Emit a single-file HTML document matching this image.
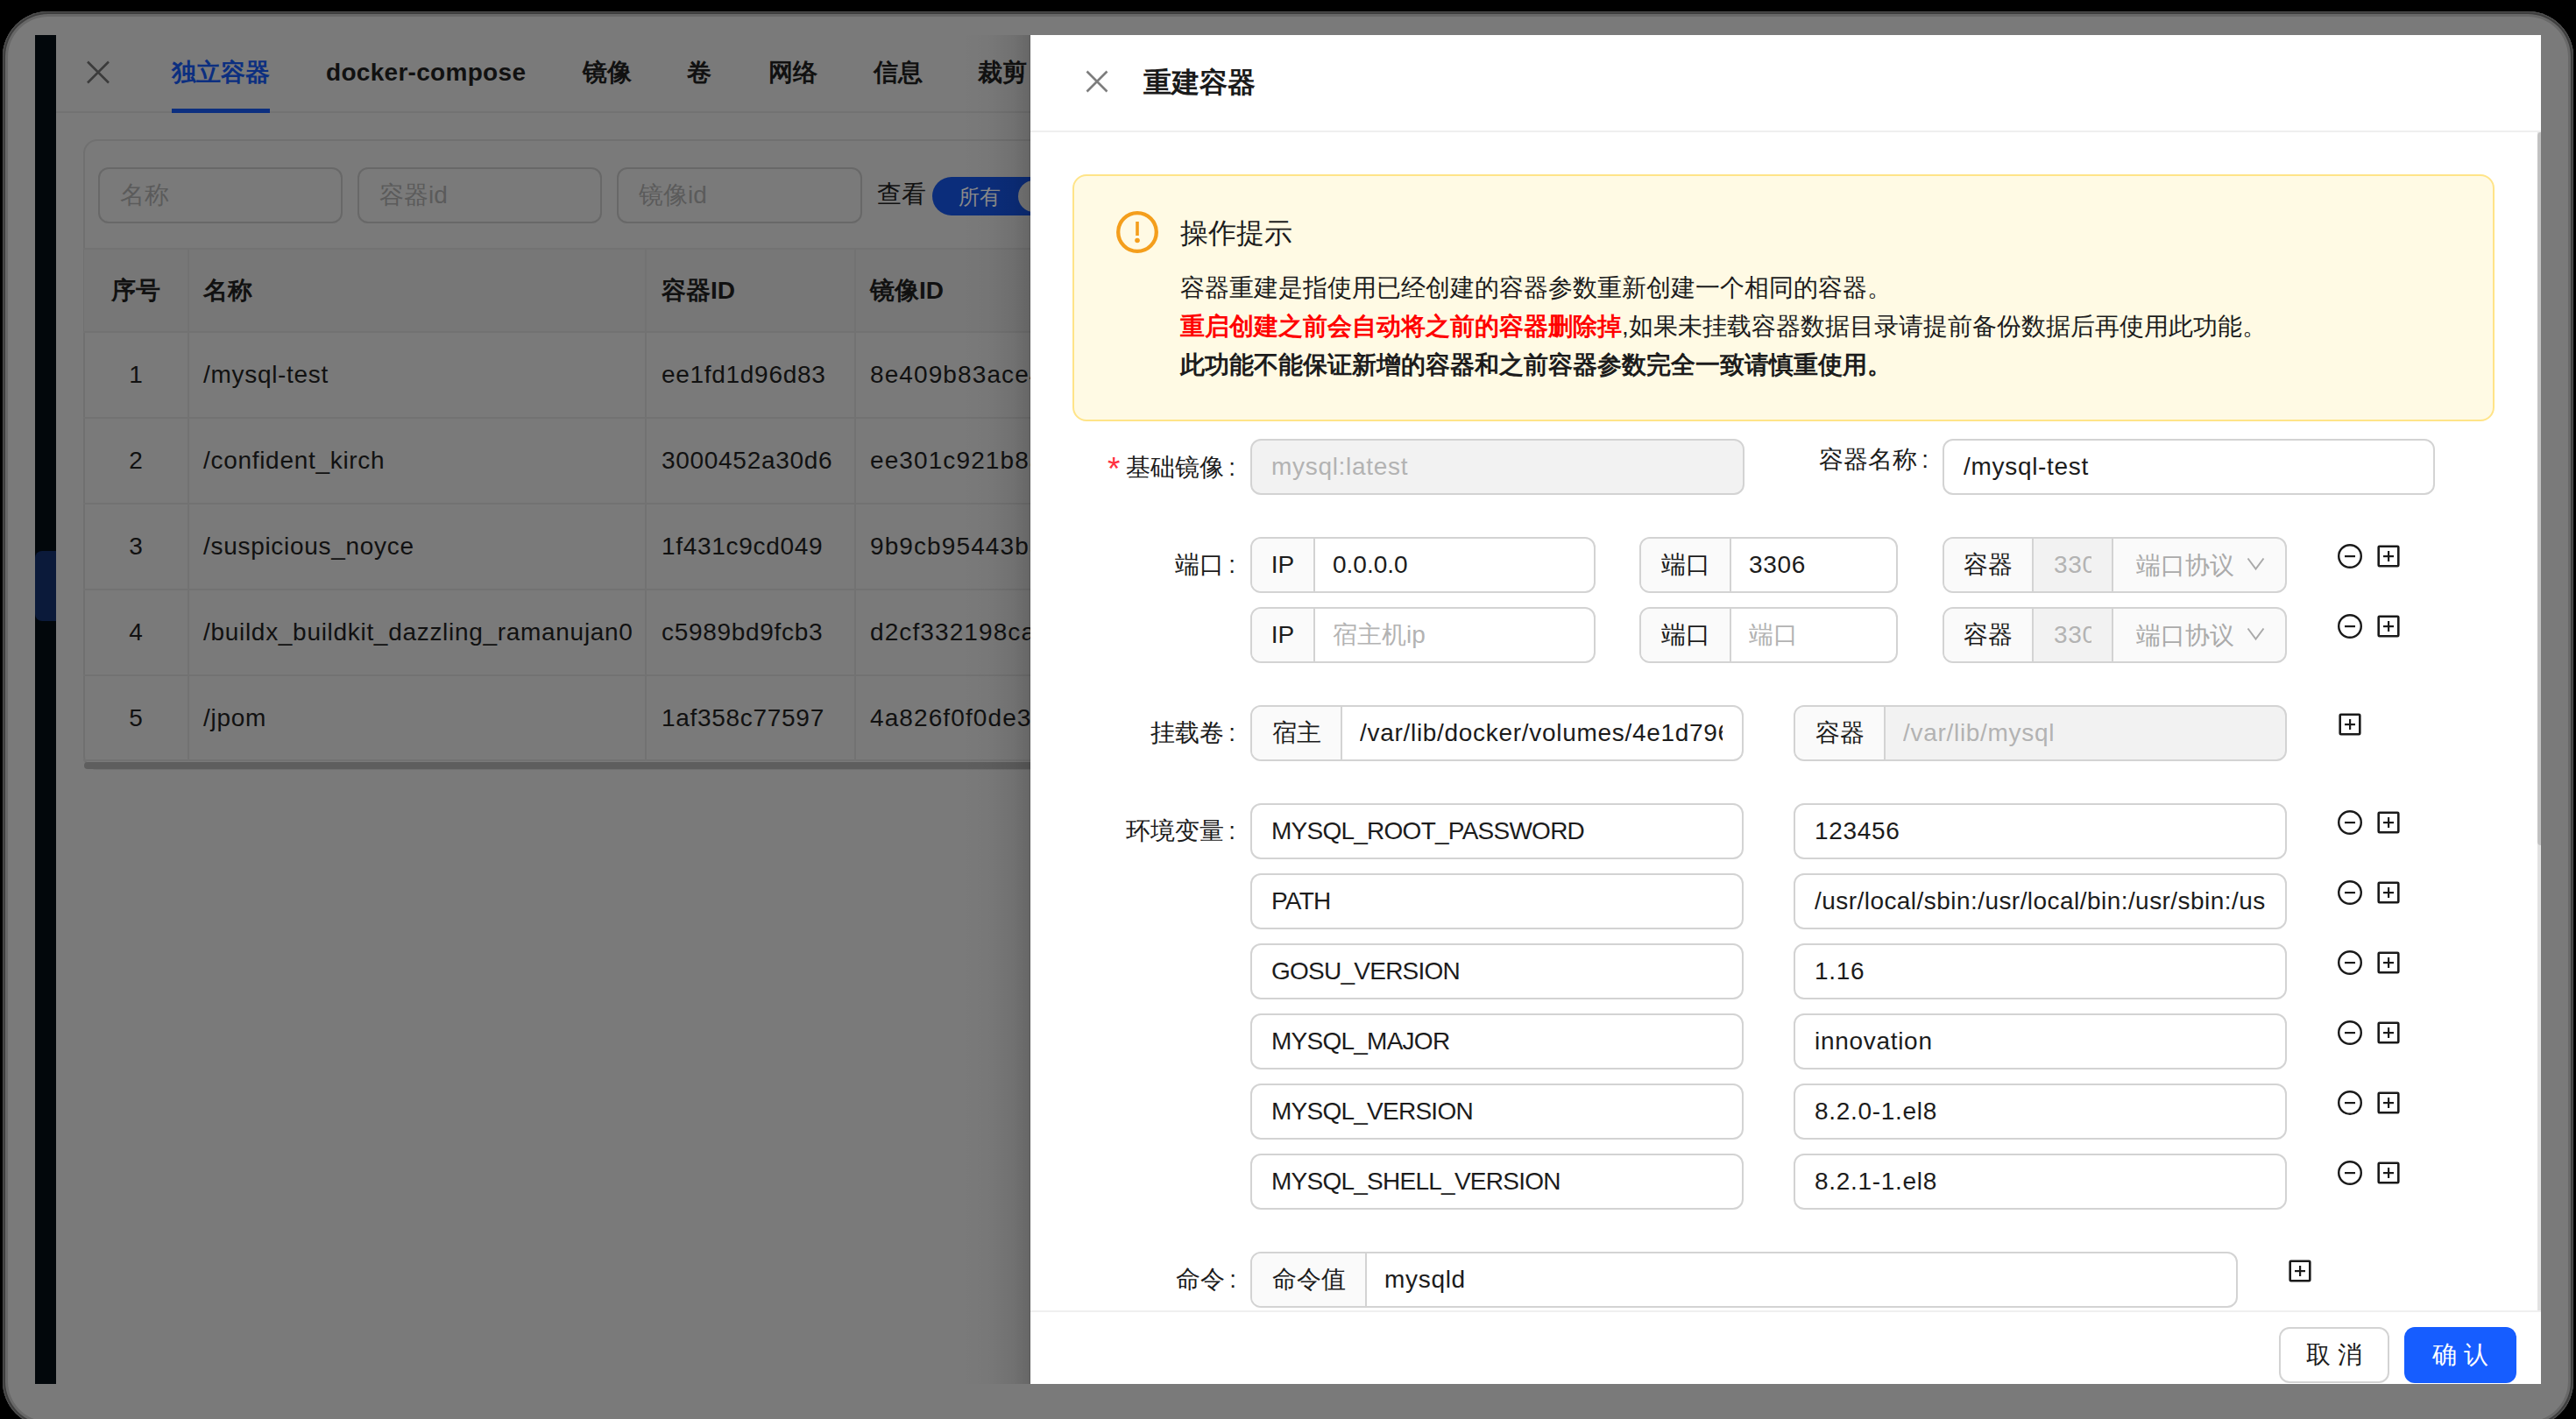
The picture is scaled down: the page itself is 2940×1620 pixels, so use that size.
<!DOCTYPE html>
<html><head><meta charset="utf-8"><style>
*{box-sizing:border-box;margin:0;padding:0}
html,body{width:2940px;height:1620px;overflow:hidden;background:#000;font-family:"Liberation Sans",sans-serif;}
.abs{position:absolute}
#win{position:absolute;left:3px;top:13px;width:2934px;height:1616px;border-radius:52px;background:#7a7a7a;overflow:hidden;box-shadow:inset 0 0 0 1px #505050,inset 0 0 0 3px #3e3e3e,inset 0 0 0 6px #686868}
#side{position:absolute;left:40px;top:40px;width:24px;height:1540px;background:#02070b}
#sidehl{position:absolute;left:40px;top:629px;width:24px;height:80px;background:#0b1a3a;border-radius:8px 0 0 8px}
.mt{position:absolute;color:#111;font-size:28px;white-space:nowrap;line-height:40px}
.tab{top:63px;font-weight:bold}
.line{position:absolute;background:#727272}
.minp{position:absolute;top:191px;height:64px;border:2px solid #686868;border-radius:12px;color:#5b5b5b;font-size:28px;line-height:60px;padding-left:23px}
.th,.td{position:absolute;font-size:28px;line-height:40px;white-space:nowrap;color:#111}
.th{font-weight:bold}
.lat{letter-spacing:0.7px}
.up{letter-spacing:-0.75px}
#drawer{position:absolute;left:1176px;top:40px;width:1724px;height:1540px;background:#fff}
.d{position:absolute;white-space:nowrap;color:#1c1c1c;font-size:28px}
.box{position:absolute;height:64px;border:2px solid #d3d3d3;border-radius:12px;background:#fff;overflow:hidden;font-size:28px;color:#1c1c1c;white-space:nowrap}
.box .v{position:absolute;top:0;line-height:60px;overflow:hidden}
.box .ad{position:absolute;left:0;top:0;bottom:0;background:#fafafa;border-right:2px solid #d3d3d3;line-height:60px;text-align:center}
.ph{color:#b3b3b3}
.lbl{position:absolute;font-size:28px;line-height:40px;color:#1c1c1c;white-space:nowrap;text-align:right}
.c{margin-left:5px}
.ico{position:absolute}
</style></head><body>
<div id="win"></div><div id="side"></div><div id="sidehl"></div>
<svg class="abs" style="left:96px;top:67px" width="32" height="32" viewBox="0 0 32 32"><path d="M4 3.5L28 27.5M28 3.5L4 27.5" stroke="#3b3b3b" stroke-width="2.5" fill="none"/></svg>
<div class="mt tab" style="left:196px;color:#0c2f80">独立容器</div>
<div class="mt tab" style="left:372px;letter-spacing:0.3px">docker-compose</div>
<div class="mt tab" style="left:665px;">镜像</div>
<div class="mt tab" style="left:784px;">卷</div>
<div class="mt tab" style="left:877px;">网络</div>
<div class="mt tab" style="left:997px;">信息</div>
<div class="mt tab" style="left:1116px;">裁剪</div>
<div class="line" style="left:64px;top:127px;width:1120px;height:2px"></div>
<div class="abs" style="left:196px;top:124px;width:112px;height:5px;background:#0c2f80"></div>
<div class="abs" style="left:95px;top:159px;width:1200px;height:720px;border:2px solid #707070;border-radius:16px"></div>
<div class="minp" style="left:112px;width:279px">名称</div>
<div class="minp" style="left:408px;width:279px">容器id</div>
<div class="minp" style="left:704px;width:280px">镜像id</div>
<div class="mt" style="left:1001px;top:202px">查看</div>
<div class="abs" style="left:1064px;top:202px;width:150px;height:44px;border-radius:22px;background:#0b2d7b"></div>
<div class="mt" style="left:1094px;top:205px;color:#8a8a8a;font-size:24px">所有</div>
<div class="abs" style="left:1162px;top:206px;width:36px;height:36px;border-radius:18px;background:#7a7a7a"></div>
<div class="abs" style="left:96px;top:285px;width:1100px;height:94px;background:#777"></div>
<div class="line" style="left:95px;top:283px;width:1100px;height:2px"></div>
<div class="line" style="left:95px;top:378px;width:1100px;height:2px"></div>
<div class="line" style="left:95px;top:476px;width:1100px;height:2px"></div>
<div class="line" style="left:95px;top:574px;width:1100px;height:2px"></div>
<div class="line" style="left:95px;top:672px;width:1100px;height:2px"></div>
<div class="line" style="left:95px;top:770px;width:1100px;height:2px"></div>
<div class="line" style="left:95px;top:867px;width:1100px;height:2px"></div>
<div class="line" style="left:214px;top:284px;width:2px;height:584px"></div>
<div class="line" style="left:736px;top:284px;width:2px;height:584px"></div>
<div class="line" style="left:975px;top:284px;width:2px;height:584px"></div>
<div class="th" style="left:127px;top:312px">序号</div><div class="th" style="left:232px;top:312px">名称</div><div class="th" style="left:755px;top:312px">容器ID</div><div class="th" style="left:993px;top:312px">镜像ID</div>
<div class="td" style="left:95px;width:120px;text-align:center;top:408px">1</div><div class="td lat" style="left:232px;top:408px">/mysql-test</div><div class="td lat" style="left:755px;top:408px">ee1fd1d96d83</div><div class="td" style="left:993px;top:408px;letter-spacing:1.1px">8e409b83ace4</div>
<div class="td" style="left:95px;width:120px;text-align:center;top:506px">2</div><div class="td lat" style="left:232px;top:506px">/confident_kirch</div><div class="td lat" style="left:755px;top:506px">3000452a30d6</div><div class="td" style="left:993px;top:506px;letter-spacing:1.1px">ee301c921b8a</div>
<div class="td" style="left:95px;width:120px;text-align:center;top:604px">3</div><div class="td lat" style="left:232px;top:604px">/suspicious_noyce</div><div class="td lat" style="left:755px;top:604px">1f431c9cd049</div><div class="td" style="left:993px;top:604px;letter-spacing:1.1px">9b9cb95443b5</div>
<div class="td" style="left:95px;width:120px;text-align:center;top:702px">4</div><div class="td lat" style="left:232px;top:702px">/buildx_buildkit_dazzling_ramanujan0</div><div class="td lat" style="left:755px;top:702px">c5989bd9fcb3</div><div class="td" style="left:993px;top:702px;letter-spacing:1.1px">d2cf332198ca</div>
<div class="td" style="left:95px;width:120px;text-align:center;top:800px">5</div><div class="td lat" style="left:232px;top:800px">/jpom</div><div class="td lat" style="left:755px;top:800px">1af358c77597</div><div class="td" style="left:993px;top:800px;letter-spacing:1.1px">4a826f0f0de3</div>
<div class="abs" style="left:96px;top:870px;width:1100px;height:8px;border-radius:4px;background:#5e5e5e"></div>
<div class="abs" style="left:1096px;top:40px;width:80px;height:1540px;background:linear-gradient(to right,rgba(0,0,0,0) 0%,rgba(0,0,0,0.02) 40%,rgba(0,0,0,0.075) 75%,rgba(0,0,0,0.16) 100%)"></div><div class="abs" style="left:1175px;top:40px;width:1px;height:1540px;background:rgba(0,0,0,0.12)"></div>
<div id="drawer"></div>
<div class="abs" style="left:1176px;top:149px;width:1724px;height:2px;background:#efefef"></div>
<svg class="abs" style="left:1238px;top:79px" width="28" height="28" viewBox="0 0 28 28"><path d="M2.5 2.5L25.5 25.5M25.5 2.5L2.5 25.5" stroke="#7d7d7d" stroke-width="2.6" fill="none"/></svg>
<div class="d" style="left:1305px;top:72px;font-size:32px;line-height:44px;font-weight:bold;color:#1a1a1a">重建容器</div>
<div class="abs" style="left:2896px;top:151px;width:4px;height:1346px;background:#e2e2e2"></div>
<div class="abs" style="left:2896px;top:151px;width:4px;height:814px;background:#c1c1c1;border-radius:4px 0 0 4px"></div>
<div class="abs" style="left:1224px;top:199px;width:1623px;height:282px;background:#fffae4;border:2px solid #ffe488;border-radius:16px"></div>
<svg class="abs" style="left:1274px;top:241px" width="48" height="48" viewBox="0 0 48 48"><circle cx="24" cy="24" r="21.8" stroke="#f49e1c" stroke-width="4.3" fill="none"/><rect x="22.2" y="12" width="3.6" height="16" fill="#f49e1c"/><circle cx="24" cy="33.5" r="2.8" fill="#f49e1c"/></svg>
<div class="d" style="left:1347px;top:244px;font-size:32px;line-height:44px">操作提示</div>
<div class="d" style="left:1347px;top:307px;line-height:44px">容器重建是指使用已经创建的容器参数重新创建一个相同的容器。</div>
<div class="d" style="left:1347px;top:351px;line-height:44px"><b style="color:#f00">重启创建之前会自动将之前的容器删除掉</b>,如果未挂载容器数据目录请提前备份数据后再使用此功能。</div>
<div class="d" style="left:1347px;top:395px;line-height:44px;font-weight:bold">此功能不能保证新增的容器和之前容器参数完全一致请慎重使用。</div>
<div class="lbl" style="right:1530px;top:514px">基础镜像<span class="c">:</span></div>
<div class="abs" style="left:1264px;top:516px;font-size:37px;line-height:40px;color:#ff3141">*</div>
<div class="box" style="left:1427px;top:501px;width:564px;background:#f2f2f2"><div class="v ph lat" style="left:22px;width:516px">mysql:latest</div></div>
<div class="lbl" style="right:739px;top:505px">容器名称<span class="c">:</span></div>
<div class="box" style="left:2217px;top:501px;width:562px;background:#fff"><div class="v lat" style="left:22px;width:514px">/mysql-test</div></div>
<div class="lbl" style="right:1530px;top:625px">端口<span class="c">:</span></div>
<div class="box" style="left:1427px;top:613px;width:394px;background:#fff"><div class="ad" style="width:72px">IP</div><div class="v" style="left:92px;width:276px">0.0.0.0</div></div>
<div class="box" style="left:1871px;top:613px;width:295px;background:#fff"><div class="ad" style="width:103px">端口</div><div class="v lat" style="left:123px;width:146px">3306</div></div>
<div class="box" style="left:2217px;top:613px;width:393px;background:#fafafa"><div class="ad" style="width:102px">容器</div><div class="abs" style="left:100px;top:0;width:93px;height:60px;background:#f2f2f2;border-left:2px solid #d3d3d3;border-right:2px solid #d3d3d3"></div><div class="abs ph lat" style="left:125px;top:0;width:43px;line-height:60px;overflow:hidden">3306</div><div class="abs ph" style="left:219px;top:1px;line-height:60px;color:#aaa">端口协议</div><svg class="abs" style="left:345px;top:21px" width="22" height="16" viewBox="0 0 22 16"><path d="M1.5 1.5L10.5 13.5L19.5 1.5" stroke="#aaa" stroke-width="2" fill="none"/></svg></div>
<svg class="ico" style="left:2667px;top:620px" width="30" height="30" viewBox="0 0 30 30"><circle cx="15" cy="15" r="12.8" stroke="#1a1a1a" stroke-width="2.4" fill="none"/><rect x="9" y="14" width="12" height="2.2" fill="#1a1a1a"/></svg>
<svg class="ico" style="left:2712px;top:621px" width="28" height="28" viewBox="0 0 28 28"><rect x="2.7" y="2.7" width="22.6" height="22.6" stroke="#1a1a1a" stroke-width="2.6" fill="none" rx="1"/><rect x="8" y="13" width="12" height="2.2" fill="#1a1a1a"/><rect x="13" y="8" width="2.2" height="12" fill="#1a1a1a"/></svg>
<div class="box" style="left:1427px;top:693px;width:394px;background:#fff"><div class="ad" style="width:72px">IP</div><div class="v ph" style="left:92px;width:276px">宿主机ip</div></div>
<div class="box" style="left:1871px;top:693px;width:295px;background:#fff"><div class="ad" style="width:103px">端口</div><div class="v ph" style="left:123px;width:146px">端口</div></div>
<div class="box" style="left:2217px;top:693px;width:393px;background:#fafafa"><div class="ad" style="width:102px">容器</div><div class="abs" style="left:100px;top:0;width:93px;height:60px;background:#f2f2f2;border-left:2px solid #d3d3d3;border-right:2px solid #d3d3d3"></div><div class="abs ph lat" style="left:125px;top:0;width:43px;line-height:60px;overflow:hidden">3306</div><div class="abs ph" style="left:219px;top:1px;line-height:60px;color:#aaa">端口协议</div><svg class="abs" style="left:345px;top:21px" width="22" height="16" viewBox="0 0 22 16"><path d="M1.5 1.5L10.5 13.5L19.5 1.5" stroke="#aaa" stroke-width="2" fill="none"/></svg></div>
<svg class="ico" style="left:2667px;top:700px" width="30" height="30" viewBox="0 0 30 30"><circle cx="15" cy="15" r="12.8" stroke="#1a1a1a" stroke-width="2.4" fill="none"/><rect x="9" y="14" width="12" height="2.2" fill="#1a1a1a"/></svg>
<svg class="ico" style="left:2712px;top:701px" width="28" height="28" viewBox="0 0 28 28"><rect x="2.7" y="2.7" width="22.6" height="22.6" stroke="#1a1a1a" stroke-width="2.6" fill="none" rx="1"/><rect x="8" y="13" width="12" height="2.2" fill="#1a1a1a"/><rect x="13" y="8" width="2.2" height="12" fill="#1a1a1a"/></svg>
<div class="lbl" style="right:1530px;top:817px">挂载卷<span class="c">:</span></div>
<div class="box" style="left:1427px;top:805px;width:563px;background:#fff"><div class="ad" style="width:103px">宿主</div><div class="v lat" style="left:123px;width:414px">/var/lib/docker/volumes/4e1d796e</div></div>
<div class="box" style="left:2047px;top:805px;width:563px;background:#f2f2f2"><div class="ad" style="width:103px">容器</div><div class="v ph lat" style="left:123px;width:414px">/var/lib/mysql</div></div>
<svg class="ico" style="left:2668px;top:813px" width="28" height="28" viewBox="0 0 28 28"><rect x="2.7" y="2.7" width="22.6" height="22.6" stroke="#1a1a1a" stroke-width="2.6" fill="none" rx="1"/><rect x="8" y="13" width="12" height="2.2" fill="#1a1a1a"/><rect x="13" y="8" width="2.2" height="12" fill="#1a1a1a"/></svg>
<div class="lbl" style="right:1530px;top:929px">环境变量<span class="c">:</span></div>
<div class="box" style="left:1427px;top:917px;width:563px;background:#fff"><div class="v up" style="left:22px;width:515px">MYSQL_ROOT_PASSWORD</div></div>
<div class="box" style="left:2047px;top:917px;width:563px;background:#fff"><div class="v lat" style="left:22px;width:515px">123456</div></div>
<svg class="ico" style="left:2667px;top:924px" width="30" height="30" viewBox="0 0 30 30"><circle cx="15" cy="15" r="12.8" stroke="#1a1a1a" stroke-width="2.4" fill="none"/><rect x="9" y="14" width="12" height="2.2" fill="#1a1a1a"/></svg>
<svg class="ico" style="left:2712px;top:925px" width="28" height="28" viewBox="0 0 28 28"><rect x="2.7" y="2.7" width="22.6" height="22.6" stroke="#1a1a1a" stroke-width="2.6" fill="none" rx="1"/><rect x="8" y="13" width="12" height="2.2" fill="#1a1a1a"/><rect x="13" y="8" width="2.2" height="12" fill="#1a1a1a"/></svg>
<div class="box" style="left:1427px;top:997px;width:563px;background:#fff"><div class="v up" style="left:22px;width:515px">PATH</div></div>
<div class="box" style="left:2047px;top:997px;width:563px;background:#fff"><div class="v" style="left:22px;width:515px"><span style="letter-spacing:0.45px">/usr/local/sbin:/usr/local/bin:/usr/sbin:/usr/bin:/sbin:/bin</span></div></div>
<svg class="ico" style="left:2667px;top:1004px" width="30" height="30" viewBox="0 0 30 30"><circle cx="15" cy="15" r="12.8" stroke="#1a1a1a" stroke-width="2.4" fill="none"/><rect x="9" y="14" width="12" height="2.2" fill="#1a1a1a"/></svg>
<svg class="ico" style="left:2712px;top:1005px" width="28" height="28" viewBox="0 0 28 28"><rect x="2.7" y="2.7" width="22.6" height="22.6" stroke="#1a1a1a" stroke-width="2.6" fill="none" rx="1"/><rect x="8" y="13" width="12" height="2.2" fill="#1a1a1a"/><rect x="13" y="8" width="2.2" height="12" fill="#1a1a1a"/></svg>
<div class="box" style="left:1427px;top:1077px;width:563px;background:#fff"><div class="v up" style="left:22px;width:515px">GOSU_VERSION</div></div>
<div class="box" style="left:2047px;top:1077px;width:563px;background:#fff"><div class="v lat" style="left:22px;width:515px">1.16</div></div>
<svg class="ico" style="left:2667px;top:1084px" width="30" height="30" viewBox="0 0 30 30"><circle cx="15" cy="15" r="12.8" stroke="#1a1a1a" stroke-width="2.4" fill="none"/><rect x="9" y="14" width="12" height="2.2" fill="#1a1a1a"/></svg>
<svg class="ico" style="left:2712px;top:1085px" width="28" height="28" viewBox="0 0 28 28"><rect x="2.7" y="2.7" width="22.6" height="22.6" stroke="#1a1a1a" stroke-width="2.6" fill="none" rx="1"/><rect x="8" y="13" width="12" height="2.2" fill="#1a1a1a"/><rect x="13" y="8" width="2.2" height="12" fill="#1a1a1a"/></svg>
<div class="box" style="left:1427px;top:1157px;width:563px;background:#fff"><div class="v up" style="left:22px;width:515px">MYSQL_MAJOR</div></div>
<div class="box" style="left:2047px;top:1157px;width:563px;background:#fff"><div class="v lat" style="left:22px;width:515px">innovation</div></div>
<svg class="ico" style="left:2667px;top:1164px" width="30" height="30" viewBox="0 0 30 30"><circle cx="15" cy="15" r="12.8" stroke="#1a1a1a" stroke-width="2.4" fill="none"/><rect x="9" y="14" width="12" height="2.2" fill="#1a1a1a"/></svg>
<svg class="ico" style="left:2712px;top:1165px" width="28" height="28" viewBox="0 0 28 28"><rect x="2.7" y="2.7" width="22.6" height="22.6" stroke="#1a1a1a" stroke-width="2.6" fill="none" rx="1"/><rect x="8" y="13" width="12" height="2.2" fill="#1a1a1a"/><rect x="13" y="8" width="2.2" height="12" fill="#1a1a1a"/></svg>
<div class="box" style="left:1427px;top:1237px;width:563px;background:#fff"><div class="v up" style="left:22px;width:515px">MYSQL_VERSION</div></div>
<div class="box" style="left:2047px;top:1237px;width:563px;background:#fff"><div class="v lat" style="left:22px;width:515px">8.2.0-1.el8</div></div>
<svg class="ico" style="left:2667px;top:1244px" width="30" height="30" viewBox="0 0 30 30"><circle cx="15" cy="15" r="12.8" stroke="#1a1a1a" stroke-width="2.4" fill="none"/><rect x="9" y="14" width="12" height="2.2" fill="#1a1a1a"/></svg>
<svg class="ico" style="left:2712px;top:1245px" width="28" height="28" viewBox="0 0 28 28"><rect x="2.7" y="2.7" width="22.6" height="22.6" stroke="#1a1a1a" stroke-width="2.6" fill="none" rx="1"/><rect x="8" y="13" width="12" height="2.2" fill="#1a1a1a"/><rect x="13" y="8" width="2.2" height="12" fill="#1a1a1a"/></svg>
<div class="box" style="left:1427px;top:1317px;width:563px;background:#fff"><div class="v up" style="left:22px;width:515px">MYSQL_SHELL_VERSION</div></div>
<div class="box" style="left:2047px;top:1317px;width:563px;background:#fff"><div class="v lat" style="left:22px;width:515px">8.2.1-1.el8</div></div>
<svg class="ico" style="left:2667px;top:1324px" width="30" height="30" viewBox="0 0 30 30"><circle cx="15" cy="15" r="12.8" stroke="#1a1a1a" stroke-width="2.4" fill="none"/><rect x="9" y="14" width="12" height="2.2" fill="#1a1a1a"/></svg>
<svg class="ico" style="left:2712px;top:1325px" width="28" height="28" viewBox="0 0 28 28"><rect x="2.7" y="2.7" width="22.6" height="22.6" stroke="#1a1a1a" stroke-width="2.6" fill="none" rx="1"/><rect x="8" y="13" width="12" height="2.2" fill="#1a1a1a"/><rect x="13" y="8" width="2.2" height="12" fill="#1a1a1a"/></svg>
<div class="lbl" style="right:1529px;top:1441px">命令<span class="c">:</span></div>
<div class="box" style="left:1427px;top:1429px;width:1127px;background:#fff"><div class="ad" style="width:131px">命令值</div><div class="v lat" style="left:151px;width:950px">mysqld</div></div>
<svg class="ico" style="left:2611px;top:1437px" width="28" height="28" viewBox="0 0 28 28"><rect x="2.7" y="2.7" width="22.6" height="22.6" stroke="#1a1a1a" stroke-width="2.6" fill="none" rx="1"/><rect x="8" y="13" width="12" height="2.2" fill="#1a1a1a"/><rect x="13" y="8" width="2.2" height="12" fill="#1a1a1a"/></svg>
<div class="abs" style="left:1176px;top:1496px;width:1724px;height:84px;background:#fff;border-top:2px solid #efefef"></div>
<div class="abs" style="left:2601px;top:1515px;width:126px;height:64px;border:2px solid #d3d3d3;border-radius:12px;background:#fff;font-size:28px;line-height:60px;text-align:center;color:#1c1c1c">取 消</div>
<div class="abs" style="left:2744px;top:1515px;width:128px;height:64px;border-radius:12px;background:#165dff;font-size:28px;line-height:64px;text-align:center;color:#fff">确 认</div>
</body></html>
